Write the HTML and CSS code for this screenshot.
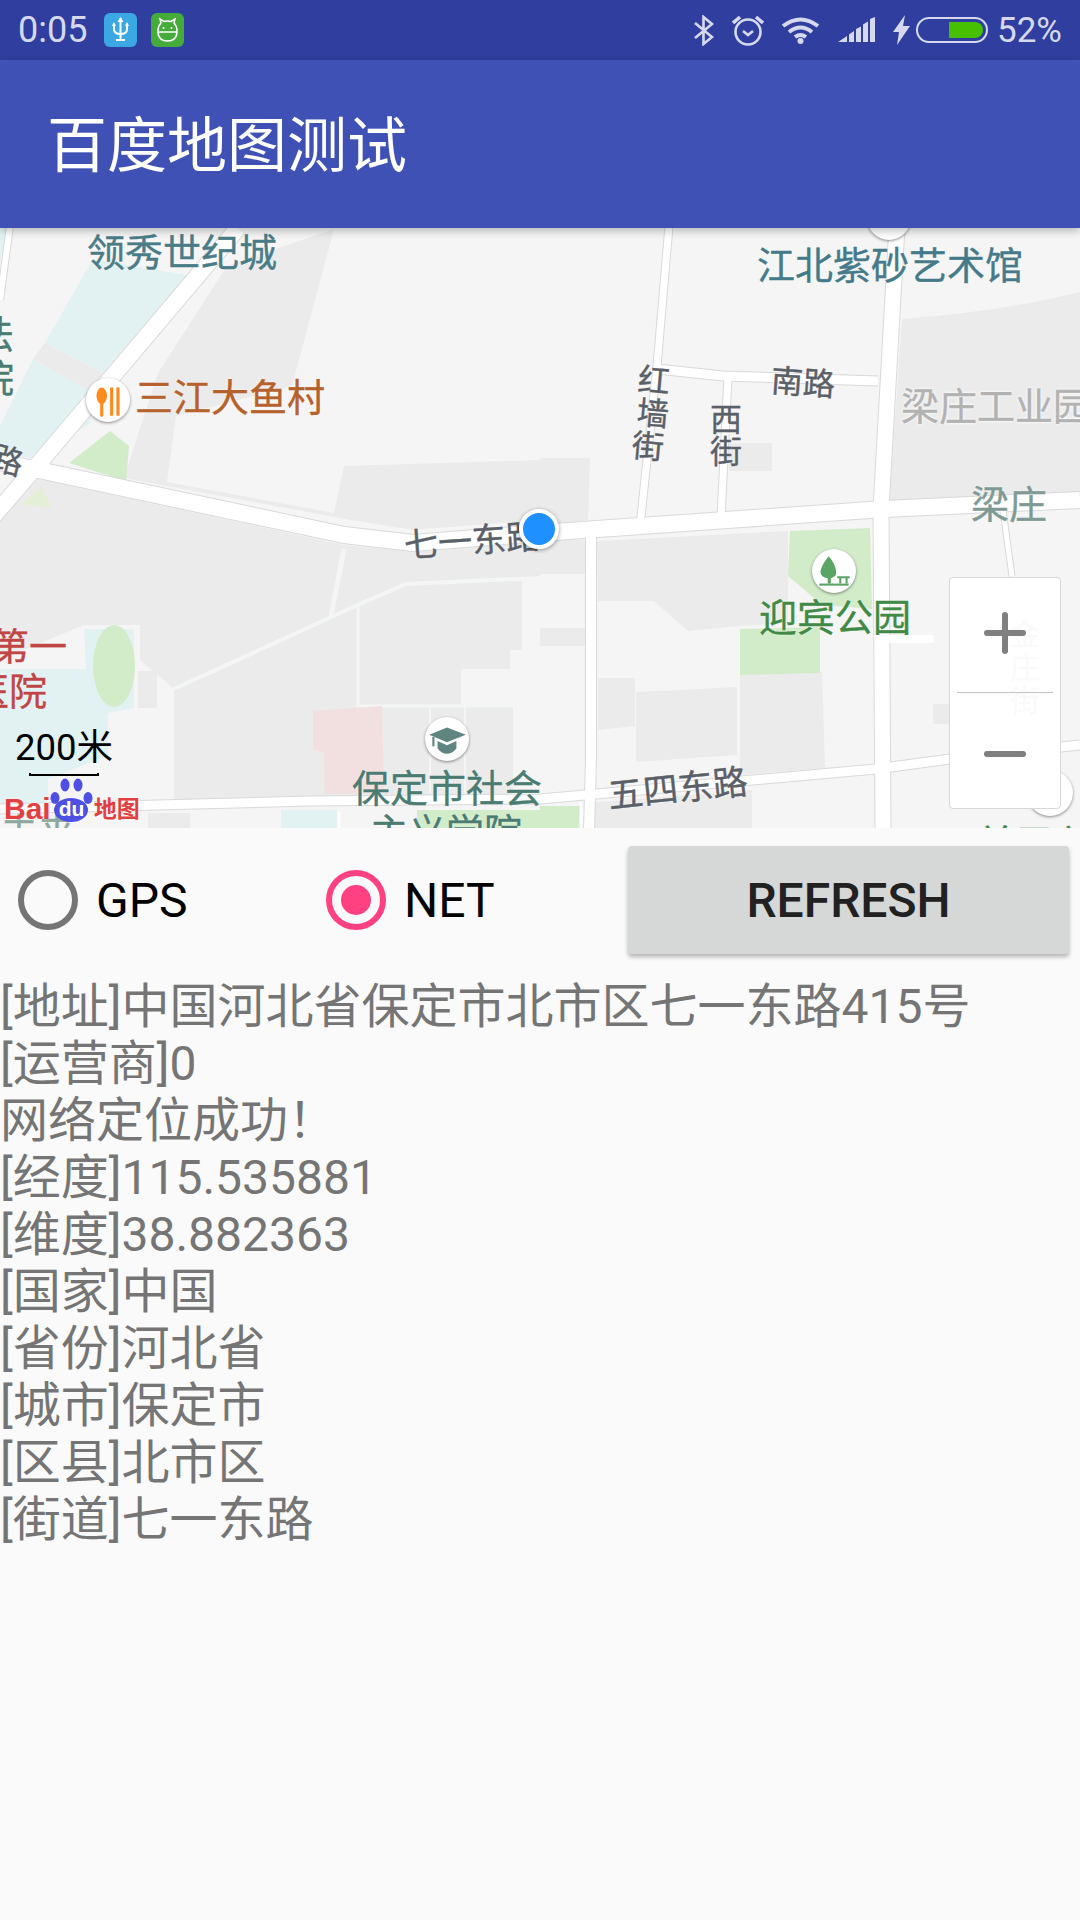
FILE: index.html
```html
<!DOCTYPE html>
<html lang="zh-CN">

<head>
    <meta charset="UTF-8">
    <meta name="viewport" content="width=device-width, initial-scale=1.0">
    <title>百度地图测试</title>
    <link rel="stylesheet" href="styles.css">
</head>

<body>
    <div class="status-bar">
        <span class="status-time">0:05</span>
        <span class="app-badge badge-usb">
            <svg width="33" height="34" viewBox="0 0 33 34" fill="none" stroke="#fff" stroke-width="2">
                <path d="M16.5 5V27M10 12V16Q10 21 16.5 21Q23 21 23 16V12M12 27H21" />
                <path d="M16.5 4L13.5 9H19.5ZM10 9L8 13H12ZM23 9L21 13H25Z" fill="#fff" stroke="none" />
            </svg>
        </span>
        <span class="app-badge badge-droid">
            <svg width="33" height="34" viewBox="0 0 33 34" fill="none" stroke="#fff" stroke-width="1.5">
                <path d="M10 10L9 6L13 8.5Q16.5 7.5 20 8.5L24 6L23 10Q26 13 26 18Q26 28 16.5 28Q7 28 7 18Q7 13 10 10Z" />
                <path d="M7 19H26" />
                <circle cx="12.5" cy="15" r="1" fill="#fff" stroke="none" />
                <circle cx="20.5" cy="15" r="1" fill="#fff" stroke="none" />
            </svg>
        </span>
        <span class="status-spacer"></span>
        <svg class="icon-bt" width="20" height="31" viewBox="0 0 20 31" fill="none" stroke="#d6d9ee" stroke-width="2.6">
            <path d="M1 8L18 22L9.5 29V2L18 9L1 23" />
        </svg>
        <svg class="icon-alarm" width="32" height="32" viewBox="0 0 32 32" fill="none" stroke="#d6d9ee" stroke-width="2.6">
            <circle cx="16" cy="18" r="12.5" />
            <path d="M11 17L16 21L21 17" />
            <path d="M1 9L8 3M31 9L24 3" stroke-width="3.6" />
        </svg>
        <svg class="icon-wifi" width="39" height="28" viewBox="0 0 39 28" fill="none" stroke="#d6d9ee" stroke-width="4">
            <path d="M2 10Q19.5 -3 37 10M8 16Q19.5 7 31 16M14 21Q19.5 17 25 21" />
            <circle cx="19.5" cy="25" r="3" fill="#d6d9ee" stroke="none" />
        </svg>
        <svg class="icon-signal" width="37" height="26" viewBox="0 0 37 26" fill="#d6d9ee">
            <path d="M0 25L9 19V25ZM11 25V17.5L16 14V25ZM18 25V12L23 9.5V25ZM25 25V7.5L30 4.5V25ZM32 25V2L37 0V25Z" />
        </svg>
        <svg class="icon-bolt" width="17" height="30" viewBox="0 0 17 30" fill="#d6d9ee">
            <path d="M12 0L0 17H6L4 30L17 11H10Z" />
        </svg>
        <span class="battery"><span class="battery-fill"></span></span>
        <span class="status-pct">52%</span>
    </div>

    <div class="app-bar">百度地图测试</div>

    <div class="map">
        <svg class="map-base" width="1080" height="600" viewBox="0 228 1080 600">
            <!-- blocks -->
            <g fill="#ebebeb">
                <path d="M158 373L227 266L334 229L292 386L176 416L167 482L334 513L344 466L540 460V520L413 530L351 520L124 478Z" />
                <path d="M45 343L103 373L90 392L33 359Z" />
                <path d="M0 500L34 478L344 545L413 552L540 542V578H522V650H510V669H461V706H513V800L174 805V689L140 660V625H84L0 660Z" />
                <path d="M138 671H157V708H138Z" />
                <path d="M597 541L788 531V623L740 626L688 631L654 601H598Z" />
                <path d="M598 678H635V726L598 730Z" />
                <path d="M636 692L737 687V755L636 762Z" />
                <path d="M740 675L822 672L825 768L740 775Z" />
                <path d="M540 540H585V574H540ZM540 628H585V646H540ZM933 704H949V724H933Z" />
                <path d="M540 458H590L588 520L540 525ZM729 443H772V471H729Z" />
                <path d="M902 319Q1000 312 1080 292V498L889 506Z" />
                <path d="M586 803L752 790V828H586Z" />
                <path d="M148 813H190V828H148Z" />
            </g>
            <!-- thin light lines across the blocks -->
            <g fill="none" stroke="#f4f5f5">
                <path d="M174 689L362 603L406 584L540 578" stroke-width="4" />
                <path d="M344 549L331 616" stroke-width="5" />
                <path d="M358 603V706H513" stroke-width="3" />
                <path d="M430 706V793M465 706V793" stroke-width="2" />
            </g>
            <!-- water-ish areas -->
            <g fill="#e2f2f2">
                <path d="M93 259L193 276L103 373L45 343Z" />
                <path d="M33 359L90 392L91 423L34 459L0 453V426Z" />
                <path d="M0 228H8L0 260Z" />
                <path d="M84 629H134V708L108 713V756L48 779V810H0V669L86 669Z" />
                <path d="M281 810H337V828H281Z" />
            </g>
            <!-- green -->
            <g fill="#d2ecc9">
                <path d="M69 463L110 431L129 446L126 481Z" />
                <path d="M790 531L870 528L872 609L822 605L788 576Z" />
                <path d="M740 629L820 627V673L740 675Z" />
                <ellipse cx="114" cy="666" rx="21" ry="41" />
                <path d="M417 810H540V828H417ZM540 806H580V828H540Z" />
            </g>
            <path d="M21 504L41 486L52 508Z" fill="#e4efd8" />
            <path d="M313 711L382 706L384 793L325 794L324 753L313 749Z" fill="#f2dfe0" />
            <!-- road casing -->
            <g fill="none" stroke="#d9d9d9" stroke-linejoin="round">
                <path d="M669 226L657 366L640 526M728 376L721 518" stroke-width="9" />
                <path d="M657 369L723 376L878 381M0 809L310 801L540 799L876 769L950 759L1080 745" stroke-width="11" />
                <path d="M591 530V759L589 830" stroke-width="12" />
                <path d="M0 462L34 469L344 535L413 543L540 533L884 509L1080 500" stroke-width="18" />
                <path d="M897 226L881 509L883 830" stroke-width="17" />
                <path d="M238 228L34 469L-10 520" stroke-width="18" />
                <path d="M10 226L0 300" stroke-width="8" />
                <path d="M1003 510L1012 576" stroke-width="7" />
            </g>
            <!-- road fill -->
            <g fill="none" stroke="#fff" stroke-linejoin="round">
                <path d="M669 226L657 366L640 526M728 376L721 518" stroke-width="7" />
                <path d="M657 369L723 376L878 381M0 809L310 801L540 799L876 769L950 759L1080 745" stroke-width="9" />
                <path d="M591 530V759L589 830" stroke-width="10" />
                <path d="M339 812V828M581 803V828" stroke-width="3" />
                <path d="M889 639H930" stroke-width="8" stroke-linecap="round" />
                <path d="M0 462L34 469L344 535L413 543L540 533L884 509L1080 500" stroke-width="16" />
                <path d="M897 226L881 509L883 830" stroke-width="15" />
                <path d="M238 228L34 469L-10 520" stroke-width="16" />
                <path d="M10 226L0 300" stroke-width="6" />
                <path d="M1003 510L1012 576" stroke-width="5" />
            </g>
        </svg>

        <span class="label teal lb-lingxiu">领秀世纪城</span>
        <span class="label blue-teal lb-zisha">江北紫砂艺术馆</span>
        <span class="label orange lb-sanjiang">三江大鱼村</span>
        <span class="label green-teal lb-fa">法<br>院</span>
        <span class="label road lb-lu">路</span>
        <span class="label road lb-hong">红</span>
        <span class="label road lb-qiang">墙</span>
        <span class="label road lb-jie1">街</span>
        <span class="label road lb-xi">西</span>
        <span class="label road lb-jie2">街</span>
        <span class="label road lb-nan">南路</span>
        <span class="label faded lb-gongye">梁庄工业园</span>
        <span class="label village lb-liang">梁庄</span>
        <span class="label road lb-qiyi">七一东路</span>
        <span class="label park lb-yingbin">迎宾公园</span>
        <span class="label road lb-wusi">五四东路</span>
        <span class="label green-teal lb-baoding">保定市社会<br><span class="lb-indent">主义学院</span></span>
        <span class="label hospital lb-di">第一</span>
        <span class="label hospital lb-yi">医院</span>
        <span class="label village lb-corner">未来</span>
        <span class="label park lb-guan">关于兴</span>
        <span class="label road lb-jin">金<br>庄<br>街</span>

        <span class="pin pin-food">
            <svg width="44" height="44" viewBox="0 0 42 42" fill="#ff8a20">
                <ellipse cx="15" cy="17" rx="5" ry="8" />
                <rect x="13.5" y="22" width="3" height="15" rx="1.5" />
                <rect x="23" y="9" width="3" height="27" />
                <rect x="29" y="9" width="3" height="27" />
            </svg>
        </span>
        <span class="pin pin-school">
            <svg width="44" height="44" viewBox="0 0 42 42" fill="#5f8583">
                <path d="M21 10L39 17L21 24L4 17Z" />
                <path d="M12 23L21 27L30 23V30Q26 35 21 35Q16 35 12 30Z" />
                <rect x="7" y="19" width="2" height="9" />
            </svg>
        </span>
        <span class="pin pin-park">
            <svg width="44" height="44" viewBox="0 0 42 42" fill="#5aa466">
                <path d="M16 7Q10 14 8 21Q8 28 16 28Q24 28 23 21Q22 14 16 7Z" />
                <rect x="15" y="26" width="3" height="7" />
                <path d="M7 33H35V35H7Z" />
                <path d="M24 26H36V28H34V33H32V28H28V33H26V28H24Z" />
            </svg>
        </span>
        <span class="pin pin-top"></span>
        <span class="pin pin-corner"></span>
        <span class="locate-dot"></span>

        <div class="zoom-ctl">
            <div class="zoom-btn">
                <svg width="42" height="42" viewBox="0 0 42 42" stroke="#808080" stroke-width="6" stroke-linecap="round">
                    <path d="M3 21H39M21 3V39" />
                </svg>
            </div>
            <div class="zoom-btn zoom-out">
                <svg width="42" height="42" viewBox="0 0 42 42" stroke="#808080" stroke-width="6" stroke-linecap="round">
                    <path d="M3 21H39" />
                </svg>
            </div>
        </div>

        <div class="scale">
            <div class="scale-text">200米</div>
            <div class="scale-bar"></div>
        </div>
        <div class="baidu-logo">
            <span class="logo-bai">Bai</span>
            <span class="logo-paw">
                <svg width="44" height="44" viewBox="0 0 44 44" fill="#4f50e3">
                    <ellipse cx="5" cy="20" rx="4.5" ry="6" />
                    <ellipse cx="15" cy="7" rx="4.5" ry="6.5" />
                    <ellipse cx="28" cy="7" rx="4.5" ry="6.5" />
                    <ellipse cx="38" cy="20" rx="4.5" ry="6" />
                    <ellipse cx="21" cy="32" rx="17" ry="12" />
                </svg>
                <span class="logo-du">du</span>
            </span>
            <span class="logo-map">地图</span>
        </div>
    </div>

    <div class="controls">
        <div class="radio-group">
            <label class="radio">
                <span class="radio-mark"></span>
                <span>GPS</span>
            </label>
            <label class="radio radio-on">
                <span class="radio-mark"><span class="radio-dot"></span></span>
                <span>NET</span>
            </label>
        </div>
        <button class="refresh">REFRESH</button>
    </div>

    <div class="info">
        <div>[地址]中国河北省保定市北市区七一东路415号</div>
        <div>[运营商]0</div>
        <div>网络定位成功！</div>
        <div>[经度]115.535881</div>
        <div>[维度]38.882363</div>
        <div>[国家]中国</div>
        <div>[省份]河北省</div>
        <div>[城市]保定市</div>
        <div>[区县]北市区</div>
        <div>[街道]七一东路</div>
    </div>
</body>

</html>
```

FILE: styles.css
```css
body {
    margin: 0;
    height: 1920px;
    overflow: hidden;
    background-color: #fafafa;
    font-family: Roboto, "Noto Sans CJK SC", sans-serif;
}

/* status bar */
.status-bar {
    display: flex;
    align-items: center;
    height: 60px;
    padding: 0 18px;
    box-sizing: border-box;
    background-color: #303f9f;
    color: #d6d9ee;
}

.status-time {
    font-size: 36px;
    width: 86px;
}

.app-badge {
    display: flex;
    width: 33px;
    height: 34px;
    border-radius: 6px;
    margin-right: 14px;
}

.badge-usb {
    background-color: #3ba8e4;
}

.badge-droid {
    background-color: #45ab3a;
}

.status-spacer {
    flex: 1;
}

.icon-bt {
    margin-right: 18px;
}

.icon-alarm {
    margin-right: 17px;
}

.icon-wifi {
    margin-right: 18px;
}

.icon-signal {
    margin-right: 18px;
}

.icon-bolt {
    margin-right: 6px;
}

.battery {
    display: flex;
    justify-content: flex-end;
    width: 72px;
    height: 26px;
    padding: 3px;
    box-sizing: border-box;
    border: 2px solid #d6d9ee;
    border-radius: 13px;
    margin-right: 9px;
}

.battery-fill {
    width: 34px;
    background-color: #46c000;
    border-radius: 0 9px 9px 0;
}

.status-pct {
    font-size: 35px;
}

/* app bar */
.app-bar {
    position: relative;
    z-index: 2;
    height: 168px;
    box-sizing: border-box;
    padding: 5px 0 0 47px;
    line-height: 163px;
    background-color: #3f51b5;
    color: #fff;
    font-size: 60px;
    box-shadow: 0 3px 8px rgba(0, 0, 0, 0.25);
}

/* map canvas */
.map {
    position: relative;
    height: 600px;
    overflow: hidden;
    background-color: #f5f5f5;
}

.map-base {
    position: absolute;
    left: 0;
    top: 0;
}

.label {
    position: absolute;
    font-size: 38px;
    line-height: 1;
    white-space: nowrap;
    text-shadow: 0 0 2px #fff;
    -webkit-text-stroke: 0.4px currentColor;
}

.teal {
    color: #4a7c87;
}

.blue-teal {
    color: #457a8a;
}

.green-teal {
    color: #4a7c72;
}

.orange {
    color: #b5622d;
}

.road {
    color: #5a6068;
    font-size: 32px;
}

.faded {
    color: #b2b2b2;
}

.village {
    color: #7f9a94;
}

.park {
    color: #3f8a45;
}

.hospital {
    color: #c04545;
}

.lb-lingxiu {
    left: 87px;
    top: 6px;
}

.lb-zisha {
    left: 757px;
    top: 19px;
}

.lb-sanjiang {
    left: 135px;
    top: 151px;
}

.lb-fa {
    left: -24px;
    top: 85px;
    line-height: 44px;
}

.lb-lu {
    left: -9px;
    top: 217px;
    transform: rotate(15deg);
}

.lb-hong {
    left: 638px;
    top: 137px;
    transform: rotate(5deg);
}

.lb-qiang {
    left: 637px;
    top: 170px;
    transform: rotate(5deg);
}

.lb-jie1 {
    left: 632px;
    top: 203px;
    transform: rotate(5deg);
}

.lb-xi {
    left: 710px;
    top: 176px;
}

.lb-jie2 {
    left: 710px;
    top: 208px;
}

.lb-nan {
    left: 771px;
    top: 139px;
    transform: rotate(4deg);
}

.lb-gongye {
    left: 901px;
    top: 160px;
    text-shadow: 0 0 3px #fff, 0 0 3px #fff;
}

.lb-liang {
    left: 971px;
    top: 258px;
}

.lb-qiyi {
    left: 404px;
    top: 296px;
    font-size: 34px;
    transform: rotate(-4deg);
}

.lb-yingbin {
    left: 759px;
    top: 371px;
}

.lb-wusi {
    left: 608px;
    top: 544px;
    font-size: 35px;
    transform: rotate(-6deg);
}

.lb-baoding {
    left: 352px;
    top: 539px;
    line-height: 44px;
}

.lb-indent {
    margin-left: 18px;
}

.lb-di {
    left: -9px;
    top: 400px;
}

.lb-yi {
    left: -29px;
    top: 445px;
}

.lb-corner {
    left: 0;
    top: 586px;
    color: #8ea8a0;
}

.lb-guan {
    left: 977px;
    top: 597px;
}

.lb-jin {
    left: 1010px;
    top: 390px;
    font-size: 30px;
    line-height: 33px;
}

/* pins */
.pin {
    position: absolute;
    width: 44px;
    height: 44px;
    border-radius: 50%;
    background-color: #fff;
    box-shadow: 0 1px 3px rgba(0, 0, 0, 0.45);
}

.pin-food {
    left: 86px;
    top: 150px;
}

.pin-school {
    left: 425px;
    top: 489px;
}

.pin-park {
    left: 812px;
    top: 321px;
}

.pin-top {
    left: 867px;
    top: -32px;
}

.pin-corner {
    left: 1027px;
    top: 542px;
    width: 46px;
    height: 46px;
}

.locate-dot {
    position: absolute;
    left: 519px;
    top: 281px;
    width: 32px;
    height: 32px;
    border: 4px solid #fff;
    border-radius: 50%;
    background-color: #1e90ff;
    box-shadow: 0 1px 4px rgba(0, 0, 0, 0.4);
}

/* zoom control */
.zoom-ctl {
    position: absolute;
    left: 949px;
    top: 349px;
    width: 112px;
    height: 232px;
    box-sizing: border-box;
    border: 1px solid #d8d8d8;
    border-radius: 4px;
    background-color: rgba(255, 255, 255, 0.97);
}

.zoom-btn {
    display: flex;
    align-items: center;
    justify-content: center;
    height: 115px;
    margin: 0 7px;
    box-sizing: border-box;
    border-bottom: 1px solid #c4c4c4;
    padding-bottom: 5px;
}

.zoom-out {
    align-items: flex-start;
    padding: 40px 0 0;
    border-bottom: 0;
}

/* scale + logo */
.scale {
    position: absolute;
    left: 15px;
    top: 499px;
    width: 100px;
    color: #000;
}

.scale-text {
    font-size: 36.5px;
    line-height: 42px;
    white-space: nowrap;
}

.scale-bar {
    width: 70px;
    height: 3px;
    margin: 4px 0 0 14px;
    box-sizing: border-box;
    border: 2px solid #000;
    border-top: 0;
}

.baidu-logo {
    position: absolute;
    left: 4px;
    top: 550px;
    display: flex;
    align-items: flex-end;
    color: #e24040;
    text-shadow: 0 0 2px #fff;
}

.logo-bai {
    font-family: "Liberation Sans", sans-serif;
    font-weight: 700;
    font-size: 30px;
    line-height: 26px;
}

.logo-paw {
    position: relative;
    display: block;
    width: 42px;
    height: 44px;
    margin-left: -1px;
}

.logo-du {
    position: absolute;
    left: 9px;
    top: 21px;
    color: #fff;
    font-family: "Liberation Sans", sans-serif;
    font-weight: 700;
    font-size: 21px;
    line-height: 20px;
    text-shadow: none;
}

.logo-map {
    margin-left: 2px;
    font-size: 23px;
    font-weight: 700;
    line-height: 24px;
}

/* radios and button */
.controls {
    display: flex;
    height: 150px;
    box-sizing: border-box;
    padding: 18px 11px 24px 0;
    font-size: 48px;
}

.radio-group {
    display: flex;
    flex: 0 0 628px;
    min-width: 0;
    padding-left: 18px;
    box-sizing: border-box;
}

.radio {
    display: flex;
    align-items: center;
    flex: 0 0 308px;
    color: #000;
}

.radio-mark {
    display: flex;
    align-items: center;
    justify-content: center;
    width: 60px;
    height: 60px;
    margin-right: 18px;
    box-sizing: border-box;
    border: 6px solid #757575;
    border-radius: 50%;
}

.radio-on .radio-mark {
    border-color: #ff4081;
}

.radio-dot {
    width: 30px;
    height: 30px;
    border-radius: 50%;
    background-color: #ff4081;
}

.refresh {
    flex: 1;
    padding: 0;
    border: 0;
    border-radius: 4px;
    background-color: #d6d7d7;
    color: #212121;
    font-family: Roboto, sans-serif;
    font-size: 48px;
    font-weight: 500;
    box-shadow: 0 3px 4px rgba(0, 0, 0, 0.28);
}

/* location text */
.info {
    font-size: 48px;
    line-height: 57px;
    color: #757575;
}
```
